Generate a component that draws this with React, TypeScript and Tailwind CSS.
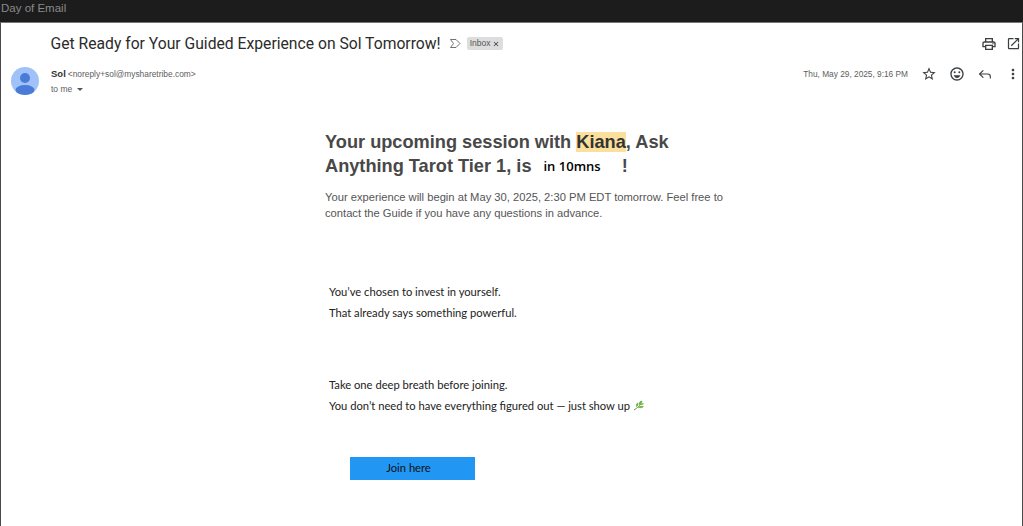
import { FC } from "react";
import { Reply } from "lucide-react";
import { MdClose, MdMoreVert, MdOpenInNew, MdOutlineEmojiEmotions, MdOutlinePrint, MdOutlineStarBorder } from "react-icons/md";

const HeaderIcons: FC = () => (
  <div className="flex items-center gap-[12px] text-[#3c3f41]">
    <MdOutlineStarBorder size={16} />
    <MdOutlineEmojiEmotions size={16} />
    <Reply size={16} strokeWidth={1.7} />
    <MdMoreVert size={16} />
  </div>
);

const Avatar: FC = () => (
  <svg width="28" height="28" viewBox="0 0 28 28" className="shrink-0">
    <circle cx="14" cy="14" r="14" fill="#a0c2f9" />
    <circle cx="14" cy="11" r="5" fill="#4a7bd8" />
    <ellipse cx="14" cy="23" rx="9.5" ry="5" fill="#4a7bd8" />
  </svg>
);

const Sprout: FC = () => (
  <svg width="11" height="11" viewBox="0 0 11 11" className="ml-[3px] inline-block align-[-1px]">
    <path d="M1 10 C4 8 7 6 9 1" stroke="#5a9a3c" strokeWidth="1" fill="none" />
    <path d="M6 5 C5.500 3 6.500 1 8.500 0.500 C9 2.500 8 4.500 6 5Z M3 7 C2.500 5 3.500 3 5 2.500 C6 4.500 5 6 3 7Z" fill="#6fb04a" />
    <path d="M4.500 7.500 C6.500 5.500 9 5.500 11 6.500 C9.500 8.500 7 8.500 4.500 7.500Z M6.500 4.500 C8 3 9.500 2.500 11 3.500 C10 5 8.500 5.500 6.500 4.500Z" fill="#7fb957" />
  </svg>
);

export default function App() {
  return (
    <div className="flex h-[526px] w-[1023px] flex-col overflow-hidden bg-white font-['Liberation_Sans',sans-serif]">
      <div className="flex h-[22px] shrink-0 items-center bg-[#1c1c1c] pb-[4px] pl-[1px] text-[11.5px] text-[#8a8a8a]">
        Day of Email
      </div>
      <div className="flex min-h-0 flex-1 flex-col border-x border-x-[#4a4a4a] border-t border-t-[#777]">
        <div className="flex h-[41px] shrink-0 items-center pl-[49.500px] pr-[1px]">
          <h1 className="font-['Roboto',sans-serif] text-[15.700px] text-[#2b2b2b]">
            Get Ready for Your Guided Experience on Sol Tomorrow!
          </h1>
          <svg width="11" height="9" viewBox="0 0 11 9" className="ml-[9px]" fill="none" stroke="#5f6368" strokeWidth="0.9">
            <path d="M0.500 0.500 H6 L10 4.500 L6 8.500 H0.500 L3.500 4.500Z" />
          </svg>
          <span className="ml-[6px] flex h-[13px] items-center gap-[2px] rounded-[2px] bg-[#dddddd] px-[3px] text-[8.500px] text-[#555]">
            Inbox
            <MdClose size={8} className="text-[#333]" />
          </span>
          <div className="ml-auto flex items-center gap-[9px] text-[#3c3f41]">
            <MdOutlinePrint size={16} />
            <MdOpenInNew size={15} />
          </div>
        </div>
        <div className="mt-[3px] flex shrink-0 items-start pl-[10px] pr-[1px]">
          <Avatar />
          <div className="ml-[12px] flex flex-col">
            <div className="flex h-[14px] items-center text-[8.400px] text-[#5e5e5e]">
              <span className="mr-[2px] text-[9.500px] font-bold text-[#333]">Sol</span>
              &lt;noreply+sol@mysharetribe.com&gt;
            </div>
            <div className="mt-[1px] flex h-[14px] items-center text-[8.500px] text-[#5e5e5e]">
              to me
              <svg width="6" height="3" viewBox="0 0 6 3" className="ml-[5px]" fill="#555">
                <path d="M0 0 H6 L3 3Z" />
              </svg>
            </div>
          </div>
          <div className="ml-auto flex h-[14px] items-center gap-[13px]">
            <span className="text-[8.300px] text-[#5e5e5e]">Thu, May 29, 2025, 9:16 PM</span>
            <HeaderIcons />
          </div>
        </div>
        <main className="ml-[324px] mt-[34px] flex w-[420px] flex-col">
          <h2 className="text-[18.200px] font-bold leading-[24px] text-[#484848]">
            Your upcoming session with <span className="bg-[#fbdf9c] text-[#333]">Kiana</span>, Ask
            <br />
            Anything Tarot Tier 1, is
            <span className="ml-[12px] align-[1px] font-['Open_Sans',sans-serif] text-[13px] font-semibold text-black">in 10mns</span>
            <span className="ml-[21px]">!</span>
          </h2>
          <p className="mt-[11px] text-[11.200px] leading-[16px] text-[#555]">
            Your experience will begin at May 30, 2025, 2:30 PM EDT tomorrow. Feel free to
            <br />
            contact the Guide if you have any questions in advance.
          </p>
          <div className="ml-[4px] mt-[63px] flex flex-col gap-[6px] font-['Lato',sans-serif] text-[11.200px] leading-[15px] text-[#222]">
            <p>You’ve chosen to invest in yourself.</p>
            <p>That already says something powerful.</p>
            <p className="mt-[51px]">Take one deep breath before joining.</p>
            <p>
              You don’t need to have everything figured out — just show up
              <Sprout />
            </p>
          </div>
          <a className="ml-[25px] mt-[44px] flex h-[23px] w-[125px] items-center justify-center pr-[8px] font-['Lato',sans-serif] text-[11.200px] text-[#111] bg-[#2196f3]">
            Join here
          </a>
        </main>
      </div>
    </div>
  );
}
